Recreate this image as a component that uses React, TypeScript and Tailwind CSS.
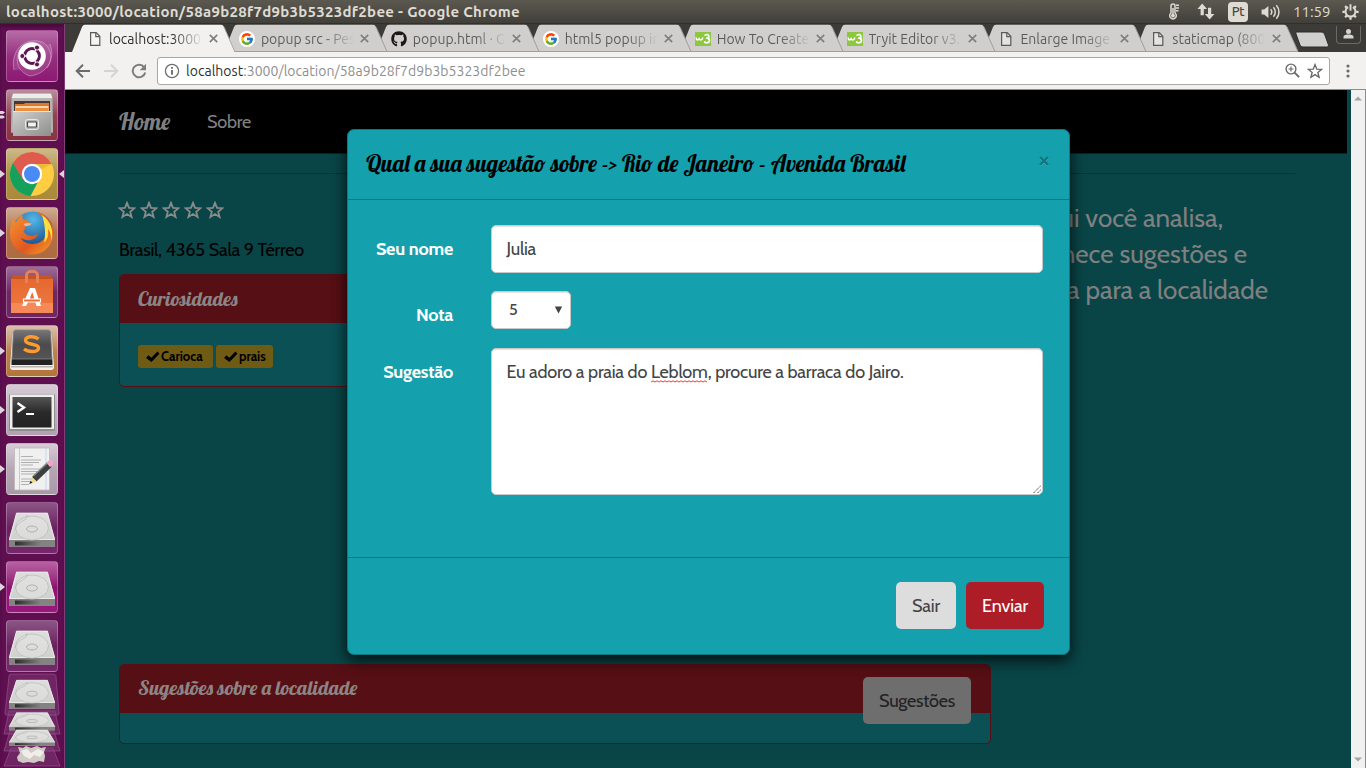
import type { ReactNode } from "react";
import { FcGoogle } from "react-icons/fc";
import { FaGithub } from "react-icons/fa";

/* ---------- Small drawings ---------- */

const FileIcon = () => (
  <svg width="16" height="16" viewBox="0 0 16 16" fill="none" stroke="#5a5a5a" strokeWidth="1.2">
    <path d="M2.600 1.600h5.600l3.600 3.700v9.100H2.600z" fill="#f8f8f8" fillOpacity="0.5" />
    <path d="M7.800 1.800v3.900h3.900" />
  </svg>
);

const GoogleIcon = () => (
  <span className="flex size-4 items-center justify-center rounded-full bg-white">
    <FcGoogle size={14} />
  </span>
);

const SchoolIcon = () => (
  <svg width="16" height="16" viewBox="0 0 16 16" fill="none" stroke="#fff" strokeLinecap="round" strokeLinejoin="round">
    <rect y="1" width="16" height="14" fill="#8dc63f" stroke="none" />
    <path d="M1.200 7c0 2.600 2.700 2.600 2.900.3.200 2.300 3.200 2.500 3.600-.4" strokeWidth="1.500" />
    <path d="M10.200 4.100c1.200-1 3.700-.6 3.700 1.200 0 1.400-1.200 1.800-2.100 1.900 1.400 0 2.700.7 2.700 2.200 0 2.400-3.300 3-4.900 1.600" strokeWidth="1.700" />
  </svg>
);

const Arrow = ({ color, flip }: { color: string; flip?: boolean }) => (
  <svg width="16" height="16" viewBox="0 0 16 16" fill="none" stroke={color} strokeWidth="2">
    <path d={flip ? "M1 8h13M8 1.7 14.3 8 8 14.3" : "M15 8H2M8 1.7 1.7 8 8 14.3"} />
  </svg>
);

const Reload = () => (
  <svg width="16" height="16" viewBox="0 0 16 16">
    <path d="M13.200 4.300A6.300 6.300 0 1 0 14.200 9.400" fill="none" stroke="#7d7d7d" strokeWidth="2" />
    <path d="M15 .8v6.400H8.700z" fill="#7d7d7d" />
  </svg>
);

const Thermometer = () => (
  <svg width="12" height="17" viewBox="0 0 12 17" fill="none" stroke="#dfdbd2" strokeWidth="1.500">
    <path d="M3 10V3a2 2 0 0 1 4 0v7a3.300 3.300 0 1 1-4 0z" />
    <path d="M5 5v7M8 2.200h3M8 5h3M8 7.800h2.500" />
    <circle cx="5" cy="12.600" r="1.200" fill="#dfdbd2" />
  </svg>
);

const Network = () => (
  <svg width="18" height="17" viewBox="0 0 18 17" fill="#dfdbd2">
    <path d="M5.200.600 10 6H6.800v6.200H3.600V6H.400z" />
    <path d="M12.600 16.400 7.800 11H11V4.800h3.200V11h3.200z" />
  </svg>
);

const Sound = () => (
  <svg width="20" height="16" viewBox="0 0 20 16" fill="none" stroke="#dfdbd2" strokeWidth="1.500">
    <path d="M.600 5.500h2.600L7.400 2v12l-4.200-3.500H.600z" fill="#dfdbd2" stroke="none" />
    <path d="M9.600 5.300a4 4 0 0 1 0 5.400M12.400 3.300a6.800 6.800 0 0 1 0 9.400M15.300 1.200a10 10 0 0 1 0 13.600" />
  </svg>
);

const Gear = () => (
  <svg width="17" height="17" viewBox="0 0 17 17" fill="none" stroke="#dfdbd2">
    <path d="M6.100 4.200a5 5 0 1 0 4.800 0" strokeWidth="2" />
    <path d="M8.500 1.200v6.500" strokeWidth="1.900" />
    <path d="M3.100 3.100l1.700 1.700M13.900 3.100l-1.700 1.700M.400 8.800h2.400M14.200 8.800h2.400M3.100 14.300l1.700-1.700M13.900 14.300l-1.700-1.700M8.500 14v2.700" strokeWidth="2.200" />
  </svg>
);

const Star = ({ size, color, width }: { size: number; color: string; width: number }) => (
  <svg width={size} height={size} viewBox="0 0 18 18" fill="none" stroke={color} strokeWidth={width} strokeLinejoin="miter">
    <path d="M9 1.800 11 6.900l5.400.3-4.200 3.500 1.400 5.300L9 13.100l-4.600 2.900 1.400-5.300L1.600 7.200 7 6.900z" />
  </svg>
);

/* ---------- Launcher icons, drawn on a 52px tile ---------- */

const UbuntuLogo = () => (
  <>
    <path d="M8 40C4 22 18 6 36 12c10 5 11 18 5 26M44 14c6 16-4 30-20 32C12 42 8 30 14 20" fill="#fff" fillOpacity="0.120" stroke="#e9bfe0" strokeOpacity="0.450" />
    <circle cx="26" cy="26" r="13.800" fill="#fff" />
    <circle cx="26" cy="26" r="7.400" fill="none" stroke="#5e1450" strokeWidth="3" />
    <path d="M26 26h-11M26 26l5.500-9.500M26 26l5.500 9.500" stroke="#fff" strokeWidth="1.300" />
    <circle cx="26" cy="26" r="5.500" fill="#fff" />
    <g fill="#5e1450" stroke="#fff" strokeWidth="0.900">
      <circle cx="16.300" cy="26" r="2.500" />
      <circle cx="31" cy="17.600" r="2.500" />
      <circle cx="31" cy="34.400" r="2.500" />
    </g>
  </>
);

const Cabinet = () => (
  <>
    <path d="M7 5.500 9 4h34l2 1.500 2 38H5z" fill="#8c8c8a" />
    <path d="M7 4.500h38l1.500 5h-41z" fill="#ececea" />
    <path d="M5.500 9.500h41l.5 34H5z" fill="#b4b4b2" />
    <path d="M8 12h36v12H8z" fill="#423a38" />
    <path d="M9 15h9l1-1h24v10H9z" fill="#e7742a" />
    <path d="M9.500 17h33v7h-33z" fill="#f8d9b0" />
    <path d="M10 19h32v5H10z" fill="#ee8f3f" />
    <path d="M7 22h38v25H7z" fill="url(#steel)" />
    <path d="M7 22.500h38" stroke="#e8e8e6" />
    <rect x="19.500" y="30.500" width="13" height="10" rx="2" fill="#b5b5b3" stroke="#e9e9e9" />
    <rect x="21.500" y="33" width="9" height="5" rx="0.500" fill="#f3f3f3" stroke="#4a4a4a" strokeWidth="1.200" />
  </>
);

const Chrome = () => (
  <>
    <circle cx="26" cy="26" r="22" fill="#ffcd42" />
    <path d="M26 26 6.900 15A22 22 0 0 0 24.500 48l9-17z" fill="#15a05c" />
    <path d="M26 16h19.600A22 22 0 0 0 6.900 15l9.600 16z" fill="#df5b50" />
    <path d="M26 16h19.600l-10 5z" fill="#c9962d" fillOpacity="0.350" />
    <circle cx="26" cy="26" r="10.200" fill="#fff" />
    <circle cx="26" cy="26" r="8" fill="#4a8af4" />
  </>
);

const Firefox = () => (
  <>
    <circle cx="27" cy="25" r="20.500" fill="url(#globe)" />
    <path d="M32 5c9 3 14 10 15.500 18 1 13-8 24-20.500 24.500C14 48 4.500 39 4 27c-.3-6 1.500-12 4-16 .2 2 .8 3 2 4 1-3 4-6 7-7-1 2-.5 4 1 5 2 .5 5 .2 6 2 .3 2-3.500 3.500-5 4 .5 2.500-.5 4.500-1.500 5.500 2 3.500 8 6.500 14.500 2-1 7-12 9-17.500 4 4 8 18 9 24 .5 5-7 2-19-6.500-25z" fill="url(#fox)" />
    <path d="M36 8c9 6 12 16 9 26 0-6-.5-9-3-12 1 7-1 11-4 14 2-9 1-19-2-28z" fill="#ffdf3d" />
    <path d="M17.500 17c3-1.500 6-1.200 8-.5-.5 2-4 2.500-6 3z" fill="#f3b29e" />
  </>
);

const Store = () => (
  <>
    <path d="M5 13h42v34H5z" fill="url(#bag)" />
    <path d="M5 13h42l-2-4H7z" fill="#c65524" />
    <path d="M5 37h42v10H5z" fill="#f58a58" />
    <path d="M20.500 17V9c0-5 11-5 11 0v8" fill="none" stroke="#e78256" strokeWidth="3" />
    <path d="M24 22h5l6 18h-4.500l-1.200-4H22l-2 4h-4zm2.200 4-2.500 7h4.800z" fill="#fff" />
    <path d="M17.500 33h17v3h-17z" fill="#ec6e34" stroke="#fff" strokeWidth="1.200" />
  </>
);

const Sublime = () => (
  <>
    <path d="M6.500 9h39L48 42c0 2-1 3-3 3H7c-2 0-3-1-3-3z" fill="#f3f0ec" />
    <path d="M5 41h42v1.500H5z" fill="#b9b4ae" />
    <path d="M8 7h36l2.500 30v3h-41v-3z" fill="#222" />
    <path d="M10 5h32c2 0 2.500 1 2.700 3L46 34H6L7.300 8C7.500 6 8 5 10 5z" fill="url(#key)" stroke="#85858a" strokeWidth="0.800" />
    <path d="M32.500 14c-4-3.500-13-3-13 1.500 0 5 13 2.500 13 7.500 0 4.500-10 4.500-14.500 1" fill="none" stroke="#fb9a2f" strokeWidth="3.400" />
  </>
);

const Terminal = () => (
  <>
    <rect x="3" y="10" width="46" height="37" rx="1.500" fill="#8e8e8e" />
    <rect x="4" y="10.500" width="44" height="34.500" fill="#eee" />
    <rect x="6.500" y="13" width="39" height="30.500" fill="url(#screen)" />
    <path d="m11.500 19 6.500 4.500-6.500 4.500" fill="none" stroke="#fff" strokeWidth="2.400" />
    <path d="M20 30h8" stroke="#fff" strokeWidth="2" />
  </>
);

const Editor = () => (
  <>
    <path d="M8.500 5h35v42h-35z" fill="#f0f0f0" stroke="#bcb8b8" strokeWidth="0.800" />
    <path d="M13.500 5v42" stroke="#f0a9a9" strokeWidth="0.800" />
    <path d="M40 5v42" stroke="#abcbe9" strokeWidth="0.600" />
    <path d="M15 13.500h12M15 17h20M15 19.500h18M15 22h12M15 26h21M15 28.500h17M15 31h16M15 36h15M15 38.500h10M15 41.500h8" stroke="#a8a8a8" strokeWidth="0.900" />
    <path d="m26 34 15-14.500 4.500 4.500-15 14.500z" fill="#3b3f40" />
    <path d="m27.500 33 15-14" stroke="#85898a" strokeWidth="1.200" />
    <path d="m26 34 4.500 4.500-7 2.500z" fill="#f0dc86" />
    <path d="m23.300 41 1.200-3.200 2 2z" fill="#222" />
    <path d="m40.500 20 3-3c2-1 5 2 3.500 4.500l-3 2.500z" fill="#f2a3c9" />
  </>
);

const Disk = () => (
  <>
    <path d="M10.500 11h31L49 37v7.500H3V37z" fill="#c8c8c6" />
    <path d="M10.500 11h31l7 26.500h-45z" fill="url(#disk)" stroke="#f5f5f5" strokeWidth="0.700" />
    <path d="M3 38h46v6.500H3z" fill="#838381" />
    <path d="M9 39.500h26v4H9z" fill="url(#slot)" />
    <ellipse cx="26" cy="26" rx="16.500" ry="12" fill="#e6e6e4" fillOpacity="0.500" stroke="#bdbdbb" strokeWidth="0.800" />
    <path d="M21 13c1 7-9 4-12 15" fill="none" stroke="#b8b8b6" strokeWidth="0.800" />
    <ellipse cx="26" cy="27" rx="5.500" ry="3" fill="#dcdcda" stroke="#a6a6a4" strokeWidth="0.800" />
  </>
);

const Gradients = () => (
  <svg width="0" height="0" className="absolute">
    <defs>
      <linearGradient id="steel" x1="0" y1="0" x2="1" y2="1"><stop stopColor="#d0d0ce" /><stop offset="1" stopColor="#8e8e8c" /></linearGradient>
      <radialGradient id="globe" cx="0.5" cy="0.2" r="0.8"><stop stopColor="#54b8e8" /><stop offset="1" stopColor="#0b3476" /></radialGradient>
      <linearGradient id="fox" x1="0" y1="0" x2="1" y2="1"><stop stopColor="#f39a35" /><stop offset="0.6" stopColor="#e2571f" /><stop offset="1" stopColor="#f4a52a" /></linearGradient>
      <linearGradient id="bag" x1="0" y1="0" x2="0" y2="1"><stop stopColor="#e5682f" /><stop offset="1" stopColor="#ee7b45" /></linearGradient>
      <linearGradient id="key" x1="0" y1="0" x2="0" y2="1"><stop stopColor="#77777a" /><stop offset="0.5" stopColor="#4b4b4d" /><stop offset="1" stopColor="#555" /></linearGradient>
      <linearGradient id="screen" x1="0" y1="0" x2="0" y2="1"><stop stopColor="#555" /><stop offset="0.5" stopColor="#2a2a2a" /><stop offset="1" stopColor="#222" /></linearGradient>
      <linearGradient id="disk" x1="0" y1="0" x2="0" y2="1"><stop stopColor="#dededc" /><stop offset="1" stopColor="#d0d0ce" /></linearGradient>
      <linearGradient id="slot" x1="0" y1="0" x2="1" y2="0"><stop stopColor="#2c2c2a" /><stop offset="1" stopColor="#838381" /></linearGradient>
    </defs>
  </svg>
);

const launcher: { icon: ReactNode; tile: string; marks: number }[] = [
  { icon: <UbuntuLogo />, tile: "from-[#b66ba6] via-[#972f80] to-[#8d1873]", marks: 0 },
  { icon: <Cabinet />, tile: "from-[#b98f9e] via-[#914355] to-[#8b3142]", marks: 2 },
  { icon: <Chrome />, tile: "from-[#cdb98c] via-[#b09242] to-[#a98a3a]", marks: 1 },
  { icon: <Firefox />, tile: "from-[#d0aa92] via-[#b3724a] to-[#ae6a40]", marks: 1 },
  { icon: <Store />, tile: "from-[#9c6c98] via-[#6d2862] to-[#6d2862]", marks: 0 },
  { icon: <Sublime />, tile: "from-[#d9c0ad] via-[#b98450] to-[#b3743a]", marks: 1 },
  { icon: <Terminal />, tile: "from-[#d6ccd6] via-[#bcaebb] to-[#b2a1b1]", marks: 1 },
  { icon: <Editor />, tile: "from-[#d6ccd6] via-[#b6a7b4] to-[#aa98a8]", marks: 1 },
  { icon: <Disk />, tile: "from-[#8c5586] via-[#6a2060] to-[#73296a]", marks: 0 },
  { icon: <Disk />, tile: "from-[#b761a4] via-[#8f1173] to-[#98187c]", marks: 1 },
  { icon: <Disk />, tile: "from-[#8c5586] via-[#6a2060] to-[#73296a]", marks: 0 },
];

const FoldedTiles = () => (
  <svg width="64" height="94" viewBox="0 0 64 94" className="block">
    <g fill="#7b3972" fillOpacity="0.550" stroke="#b583ae" strokeOpacity="0.450" strokeWidth="0.800">
      <path d="M11 75h42l7 18H4z" />
      <path d="M10 58h44l6 20H4z" />
      <path d="M9 38h46l5 23H4z" />
      <path d="M11 1h42c2 0 3 1 3 2l3 37c0 2-1 2-2 2H7c-1 0-2 0-2-2L9 3c0-1 1-2 2-2z" />
    </g>
    <g transform="translate(6 -2) scale(1 .84)"><Disk /></g>
    <g transform="translate(6 34) scale(1 .52)"><Disk /></g>
    <g transform="translate(6 52) scale(1 .46)"><Disk /></g>
    <path d="m18 74 5 1 3-2 5 2 6-2 4 2 5-1-2 5 1 4-1 6-5-1-5 2-6-1-5 1-5-2-1-4 3-4z" fill="#cfcbc6" />
    <path d="m21 78 6-2 4 4 7-4 6 3-4 5-6-2-4 4-6-3z" fill="#f1eeea" />
  </svg>
);

/* ---------- Desktop chrome ---------- */

const tabs: { title: string; icon: ReactNode }[] = [
  { title: "localhost:3000", icon: <FileIcon /> },
  { title: "popup src - Pes", icon: <GoogleIcon /> },
  { title: "popup.html · G", icon: <FaGithub size={16} color="#1b1817" /> },
  { title: "html5 popup in", icon: <GoogleIcon /> },
  { title: "How To Create", icon: <SchoolIcon /> },
  { title: "Tryit Editor v3.", icon: <SchoolIcon /> },
  { title: "Enlarge Image", icon: <FileIcon /> },
  { title: "staticmap (800", icon: <FileIcon /> },
];
const layers = ["z-80", "z-70", "z-60", "z-50", "z-40", "z-30", "z-20", "z-10"];

const TabStrip = () => (
  <div className="flex h-7 items-start bg-[#3c3b37] pl-[7px]">
    {tabs.map((tab, i) => (
      <div key={tab.title} className={`relative h-7 w-[164px] shrink-0 ${i ? "-ml-[12.1px]" : ""} ${layers[i]}`}>
        <svg width="164" height="28" viewBox="0 0 164 28" className="absolute inset-0">
          <path d="M0 28 10 3Q11 .8 13 .8H149Q151 .8 152 3L163 28z" fill={i ? "#d1cfcd" : "#f2f1f0"} />
          {i ? <path d="M0 27.500h163L152 3" fill="none" stroke="#a09e9b" /> : <path d="m163 28-11-25" fill="none" stroke="#aaa8a4" />}
        </svg>
        <div className="relative flex h-7 items-center pl-[15.5px] pt-px">
          <span className="flex size-4 shrink-0">{tab.icon}</span>
          <span className={`ml-[5.5px] w-[104px] shrink-0 whitespace-nowrap bg-clip-text text-sm leading-5 text-transparent bg-linear-to-r ${i ? "from-[#5a5957] from-60% to-[#d1cfcd] to-90%" : "from-[#2b2b2b] from-60% to-[#f2f1f0] to-90%"}`}>{tab.title}</span>
          <svg width="9" height="9" viewBox="0 0 9 9" className="-ml-[4.5px] shrink-0" stroke="#82807e" strokeWidth="1.700"><path d="m.8.8 7.400 7.400M8.200.8.800 8.200" /></svg>
        </div>
      </div>
    ))}
    <svg width="34" height="17" viewBox="0 0 34 17" className="mt-[7px] -ml-1 shrink-0"><path d="M2 1h24c2 0 3 1 3.500 2l4 11c0 1-.5 2-2 2H8c-1.500 0-2.500-1-3-2L1 3C.6 1.800 1 1 2 1z" fill="#d1cfcd" stroke="#2d2c29" /></svg>
    <div className="ml-auto mr-[5px] mt-0.5 flex h-[18px] w-[25px] items-center justify-center rounded-b border border-t-0 border-[#6b6a65] bg-[#3a3935]">
      <svg width="11" height="10" viewBox="0 0 11 10" fill="#d6d4cf" className="-mt-0.5"><circle cx="5.500" cy="2.600" r="2.500" /><path d="M.5 9.500V8c0-2 3-2.500 5-2.500s5 .5 5 2.500v1.500z" /></svg>
    </div>
  </div>
);

const Toolbar = () => (
  <div className="flex h-[38px] items-center border-b border-[#8f8f8a] bg-[#f2f1f0] pl-2.5">
    <Arrow color="#6c6b69" />
    <span className="ml-3 flex"><Arrow color="#d5d4d2" flip /></span>
    <span className="ml-3 flex"><Reload /></span>
    <div className="ml-2.5 flex h-7 w-[1173px] items-center rounded-[3px] border border-[#a9a7a4] bg-white pl-1.5 pr-[6px]">
      <svg width="16" height="16" viewBox="0 0 16 16" fill="none" stroke="#707070" strokeWidth="1.300"><circle cx="8" cy="8" r="6.600" /><path d="M8 7v4.800M8 4v1.700" strokeWidth="1.900" /></svg>
      <span className="ml-[6px] text-sm leading-5 tracking-[0.03px] text-[#8e8e8e]"><span className="text-[#2f2f2f]">localhost</span>:3000/location/58a9b28f7d9b3b5323df2bee</span>
      <svg width="15" height="15" viewBox="0 0 15 15" fill="none" stroke="#6b6b6b" strokeWidth="1.400" className="ml-auto"><circle cx="6" cy="6" r="4.900" /><path d="m9.600 9.600 4.500 4.500" strokeWidth="2" /><path d="M6 3.500v5M3.500 6h5" strokeWidth="1.200" /></svg>
      <span className="ml-[7px]"><Star size={16} color="#666" width={1.5} /></span>
    </div>
    <svg width="4" height="14" viewBox="0 0 4 14" fill="#6b6b6b" className="ml-[16px]"><circle cx="2" cy="2" r="1.600" /><circle cx="2" cy="7" r="1.600" /><circle cx="2" cy="12" r="1.600" /></svg>
  </div>
);

/* ---------- Web page under the backdrop ---------- */

const script = "font-[Lobster,cursive]";

const Tag = ({ children, width }: { children: string; width: string }) => (
  <span className={`flex h-[23px] items-center rounded-[3px] bg-[#705b14] pl-[8px] text-[13px] font-bold text-black ${width}`}>
    <svg width="14" height="12" viewBox="0 0 15 13" className="mr-px shrink-0"><path d="m0 7.500 2.500-2.800 3.200 2.500L12.300.5 14.500 3 5.800 12z" /></svg>
    {children}
  </span>
);

const Page = () => (
  <div className="h-full w-[1286px] bg-[#094547]">
    <nav className="flex h-16 w-[1282px] items-center border-b border-[#400a0e] bg-black pl-[54px] text-[#808080]">
      <span className={`w-[88px] text-[23px] leading-8 ${script}`}>Home</span>
      <span className="pt-0.5 text-[18px] tracking-[-0.21px]">Sobre</span>
    </nav>
    <div className="ml-[54px] mt-[19px] w-[1176px] border-t border-[#063638]">
      <div className="flex">
        <div className="w-[872px] shrink-0 pt-[27px]">
          <div className="-ml-px flex gap-1">
            {[1, 2, 3, 4, 5].map((n) => <Star key={n} size={18} color="#8a8a8a" width={1.8} />)}
          </div>
          <p className="mt-[18px] h-[26px] text-[18px] leading-[26px] tracking-[-0.21px] text-black">Brasil, 4365 Sala 9 Térreo</p>
          <section className="mt-[11px] h-[113px] overflow-hidden rounded-[5px] border border-[#560f14] bg-[#0a5054]">
            <h3 className={`h-12 bg-[#560f14] pl-[18px] text-[20px] leading-[48px] text-[#8c8586] ${script}`}>Curiosidades</h3>
            <div className="flex gap-[3px] pl-[18px] pt-[22px]">
              <Tag width="w-[75px]">Carioca</Tag>
              <Tag width="w-[57px]">prais</Tag>
            </div>
          </section>
          <section className="mt-[277px] h-20 rounded-[5px] border border-[#560f14] bg-[#0a5054]">
            <div className="flex h-12 items-start rounded-t bg-[#560f14] pl-[18px] pr-[19px]">
              <h3 className={`text-[20px] leading-[46px] text-[#8c8586] ${script}`}>Sugestões sobre a localidade</h3>
              <button className="ml-auto mt-3 h-[47px] w-[108px] rounded-[5px] bg-[#6e6e6e] pt-0.5 text-[18px] tracking-[-0.22px] text-[#222]">Sugestões</button>
            </div>
          </section>
        </div>
        <div className="ml-7 pt-[26px] text-right text-[26px] leading-9 text-[#808080]">
          <p className="w-[204px] whitespace-nowrap">Aqui você analisa,</p>
          <p className="w-[228px] whitespace-nowrap">conhece sugestões e</p>
          <p className="w-[249px] whitespace-nowrap">nota para a localidade</p>
        </div>
      </div>
    </div>
  </div>
);

/* ---------- Suggestion dialog ---------- */

const field = "rounded-[5px] border border-[#c9c9c9] bg-white text-[#444] shadow-[inset_0_1px_1px_rgba(0,0,0,0.12)]";
const labelText = "w-[105px] pt-[11px] text-right font-bold leading-[26px] tracking-[-0.21px] text-white";

const Dialog = () => (
  <div className="absolute left-[282px] top-[39px] flex h-[526px] w-[723px] flex-col rounded-[7px] border border-[#0f777f] bg-[#14a0ac] text-[18px] shadow-[0_5px_15px_rgba(0,0,0,0.8)]">
    <header className="flex h-[70px] items-start justify-between border-b border-[#0f7780] pl-[18px] pr-[20px]">
      <h2 className={`pt-[16px] text-[23px] leading-9 text-black ${script}`}>Qual a sua sugestão sobre -&gt; Rio de Janeiro - Avenida Brasil</h2>
      <svg width="10" height="10" viewBox="0 0 10 10" className="mt-[26px]" fill="none"><path d="m1 2 8 8m0-8-8 8" stroke="#56b9c1" strokeWidth="1.500" /><path d="m1 1 8 8m0-8L1 9" stroke="#0e757e" strokeWidth="2.200" /></svg>
    </header>
    <div className="flex h-[358px] flex-col border-b border-[#0f7780] pt-[25px]">
      <div className="flex h-[66px] items-start">
        <label className={labelText}>Seu nome</label>
        <div className={`ml-[38px] h-12 w-[552px] pl-[14.5px] leading-[46px] tracking-[-0.2px] ${field}`}>Julia</div>
      </div>
      <div className="flex h-[57px] items-start">
        <label className={labelText}>Nota</label>
        <div className={`ml-[38px] flex h-[38px] w-20 items-center justify-between pl-[17px] pr-[7px] text-[16px] ${field}`}>
          5
          <svg width="9" height="8" viewBox="0 0 9 8" fill="#444"><path d="M.8.5h7.400L4.500 7.500z" /></svg>
        </div>
      </div>
      <div className="flex items-start">
        <label className={labelText}>Sugestão</label>
        <div className={`ml-[38px] flex h-[147px] w-[552px] flex-col justify-between pl-[14.5px] pt-[10px] ${field}`}>
          <p className="leading-[26px] tracking-[-0.2px]">
            Eu adoro a praia do <span className="relative inline-block">Leblom<svg width="56" height="3" viewBox="0 0 56 3" className="absolute bottom-[2px] left-0" fill="none" stroke="#f33"><path d="M0 2 2 .8 4 2 6 .8 8 2l2-1.200L12 2l2-1.200L16 2l2-1.200L20 2l2-1.200L24 2l2-1.200L28 2l2-1.200L32 2l2-1.200L36 2l2-1.200L40 2l2-1.200L44 2l2-1.200L48 2l2-1.200L52 2l2-1.200L56 2" /></svg></span>, procure a barraca do Jairo.
          </p>
          <svg width="9" height="9" viewBox="0 0 9 9" className="self-end" stroke="#444" strokeDasharray="1.400 .6"><path d="m.5 8 7.500-7.500M4.500 8 8 4.500" /></svg>
        </div>
      </div>
    </div>
    <footer className="flex justify-end gap-2.5 pr-[25px] pt-6">
      <button className="h-[47px] w-[60px] rounded-[5px] bg-[#ddd] pt-0.5 tracking-[-0.2px] text-[#444]">Sair</button>
      <button className="h-[47px] w-[78px] rounded-[5px] bg-[#ad1d28] pt-0.5 tracking-[-0.1px] text-white">Enviar</button>
    </footer>
  </div>
);

export default function App() {
  return (
    <div className="flex h-[768px] w-[1366px] flex-col overflow-hidden font-['Ubuntu','Noto_Sans',sans-serif]">
      <Gradients />
      <header className="flex h-6 shrink-0 items-center border-b border-[#302f2b] bg-linear-to-b from-[#5b594f] to-[#413f3a] pl-1.5 text-[15px] text-[#dfdbd2]">
        <h1 className="whitespace-nowrap pt-px font-bold tracking-[0.296px]">localhost:3000/location/58a9b28f7d9b3b5323df2bee - Google Chrome</h1>
        <div className="ml-auto flex items-center pr-[7px]">
          <Thermometer />
          <span className="ml-[17px]"><Network /></span>
          <span className="ml-[13px] flex h-5 w-5 items-center justify-center rounded-sm bg-[#dfdbd2] text-[13px] font-medium tracking-[-0.5px] text-[#4a4843]">Pt</span>
          <span className="ml-[13px]"><Sound /></span>
          <span className="ml-[12px] w-[37px] whitespace-nowrap pt-px">11:59</span>
          <span className="ml-3"><Gear /></span>
        </div>
      </header>
      <div className="flex min-h-0 grow">
        <aside className="flex w-[65px] shrink-0 flex-col gap-[7px] border-r border-[#823d79] bg-[#5f0f50] pt-1.5 shadow-[inset_0_3px_3px_rgba(0,0,0,0.25)]">
          {launcher.map((item, i) => (
            <div key={i} className="relative flex h-[52px] shrink-0 items-center pl-1.5">
              <div className={`size-[52px] overflow-hidden rounded-[4px] border border-white/25 bg-linear-to-b ${item.tile}`}>
                <svg width="52" height="52" viewBox="0 0 52 52" className="-ml-px -mt-px">{item.icon}</svg>
              </div>
              {item.marks === 1 && <svg width="5" height="8" viewBox="0 0 5 8" className="absolute left-0" fill="#ddd5dc"><path d="m0 0 5 4-5 4z" /></svg>}
              {item.marks === 2 && <svg width="5" height="8" viewBox="0 0 5 8" className="absolute left-0" fill="#ddd5dc"><path d="M0 0h3l2 1.500L3 3H0zM0 4.500h3L5 6 3 7.500H0z" /></svg>}
              {i === 2 && <svg width="5" height="8" viewBox="0 0 5 8" className="absolute right-0" fill="#ddd5dc"><path d="M5 0 0 4l5 4z" /></svg>}
            </div>
          ))}
          <div className="-mt-[6px]"><FoldedTiles /></div>
        </aside>
        <main className="isolate flex min-w-0 grow flex-col">
          <TabStrip />
          <Toolbar />
          <div className="flex min-h-0 grow font-[Cabin,Lato,sans-serif]">
            <div className="relative h-full w-[1286px] shrink-0 overflow-hidden">
              <Page />
              <Dialog />
            </div>
            <div className="flex grow flex-col items-center justify-between border-r border-[#8b8b8b] bg-[#f1f1f1] py-[6px]">
              <svg width="8" height="5" viewBox="0 0 8 5" fill="#a3a3a3"><path d="M0 4.500 4 .5l4 4z" /></svg>
              <svg width="8" height="5" viewBox="0 0 8 5" fill="#a3a3a3"><path d="m0 .5 4 4 4-4z" /></svg>
            </div>
          </div>
        </main>
      </div>
    </div>
  );
}
